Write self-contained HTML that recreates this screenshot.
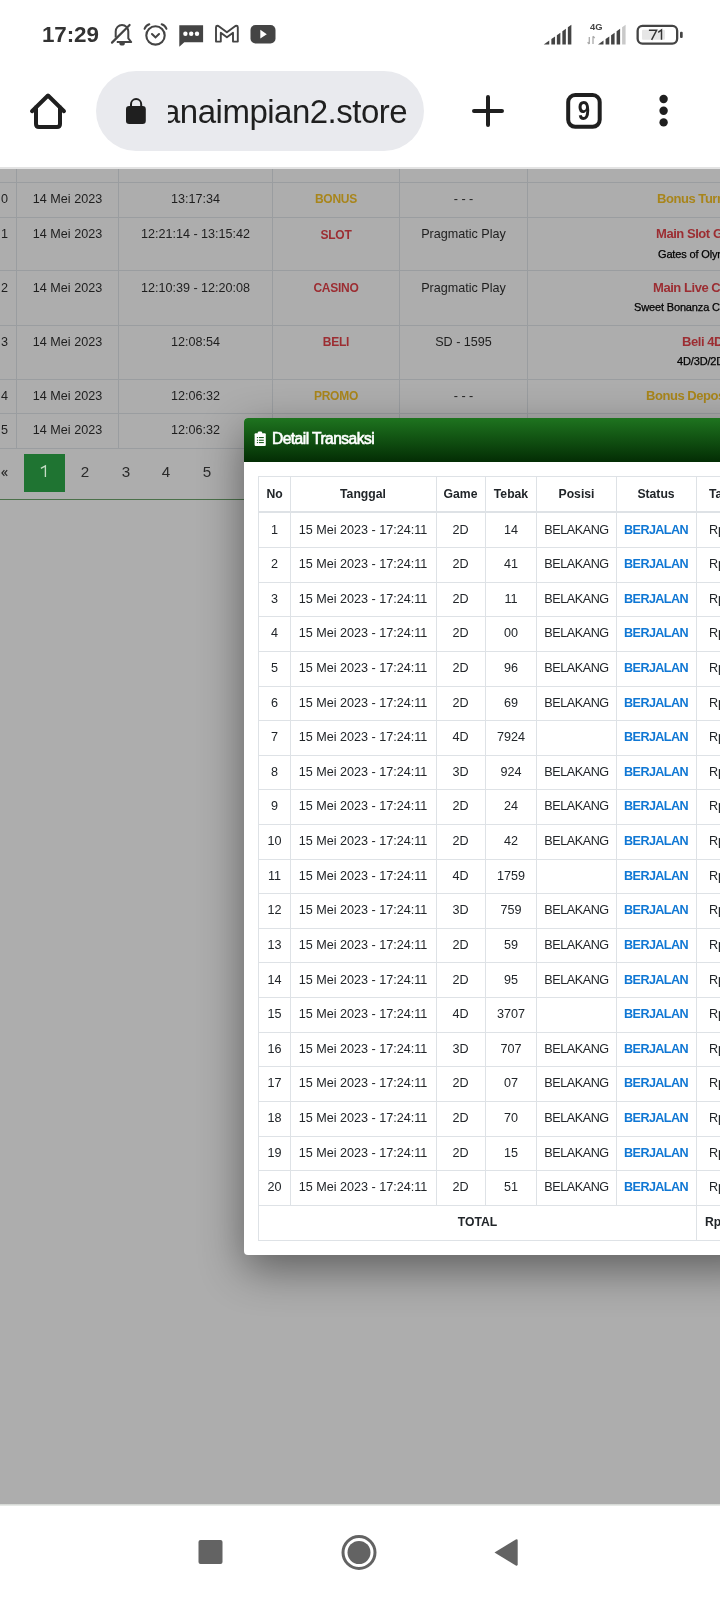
<!DOCTYPE html>
<html><head><meta charset="utf-8"><style>
html,body{margin:0;padding:0}
body{width:720px;height:1600px;position:relative;overflow:hidden;background:#fff;font-family:"Liberation Sans",sans-serif}
.t{position:absolute;white-space:nowrap;will-change:transform}
.r{position:absolute}
svg text{will-change:transform}
</style></head><body>
<div class="t" style="left:41.60px;top:24.33px;font-size:22.4px;line-height:22.4px;color:#333;font-weight:700;letter-spacing:-0.1px;">17:29</div>
<svg class="r" style="left:0;top:0" width="720" height="70" viewBox="0 0 720 70">
<!-- bell muted -->
<g fill="none" stroke="#444" stroke-width="2" stroke-linejoin="round">
<path d="M116.8 42 H131.2 L128.3 38.3 V31.6 A6.3 6.6 0 0 0 115.7 31.6 V37.5"/>
</g>
<path d="M112 42.6 L129.6 25" stroke="#444" stroke-width="2.2" stroke-linecap="round"/>
<path d="M119.3 43 h5.6 a2.8 2.6 0 0 1 -5.6 0z" fill="#444"/>
<!-- alarm -->
<g fill="none" stroke="#444" stroke-width="2.1" stroke-linecap="round">
<circle cx="155.5" cy="35.4" r="9.2"/>
<path d="M152 34 L155.5 37.4 L159 34"/>
<path d="M144.6 28.8 A7 7 0 0 1 149.3 24.2"/>
<path d="M166.4 28.8 A7 7 0 0 0 161.7 24.2"/>
</g>
<!-- message -->
<path d="M179.3 25.2 h23.8 v17 h-18.8 l-5 4.6 z" fill="#444"/>
<circle cx="185.4" cy="33.8" r="2.2" fill="#fff"/><circle cx="191.2" cy="33.8" r="2.2" fill="#fff"/><circle cx="197" cy="33.8" r="2.2" fill="#fff"/>
<!-- gmail -->
<path d="M216 41.6 V27.3 Q216 25.8 217.5 25.8 Q218.3 25.8 219.1 26.4 L226.9 32.3 L234.7 26.4 Q235.5 25.8 236.3 25.8 Q237.8 25.8 237.8 27.3 V41.6 H233 V32.8 L226.9 37.3 L220.8 32.8 V41.6 Z" fill="#fff" stroke="#444" stroke-width="1.9" stroke-linejoin="round"/>
<!-- youtube -->
<rect x="250.5" y="25" width="25" height="18.4" rx="5" fill="#444"/>
<path d="M260.3 29.8 L266.8 34.2 L260.3 38.6 Z" fill="#fff"/>
<!-- signal 1 -->
<path d="M543.75 44.5 L549.25 40.58 V44.5 Z" fill="#444"/>
<path d="M551.35 44.5 V39.08 L555.05 36.45 V44.5 Z" fill="#444"/>
<path d="M556.85 44.5 V35.16 L560.35 32.67 V44.5 Z" fill="#444"/>
<path d="M562.35 44.5 V31.24 L565.85 28.75 V44.5 Z" fill="#444"/>
<path d="M567.85 44.5 V27.32 L571.35 24.83 V44.5 Z" fill="#444"/>
<!-- 4G -->
<text x="590" y="29.8" font-family="Liberation Sans" font-weight="700" font-size="9.4" fill="#444">4G</text>
<g stroke="#aaa" stroke-width="1.3" fill="none"><path d="M589.3 44 V37 M587.6 42.2 L589.3 44"/><path d="M593 36.3 V44 M594.7 38 L593 36.3"/></g>
<path d="M598.00 44.5 L603.50 40.58 V44.5 Z" fill="#444"/>
<path d="M605.60 44.5 V39.08 L609.30 36.45 V44.5 Z" fill="#444"/>
<path d="M611.10 44.5 V35.16 L614.60 32.67 V44.5 Z" fill="#444"/>
<path d="M616.60 44.5 V31.24 L620.10 28.75 V44.5 Z" fill="#444"/>
<path d="M622.10 44.5 V27.32 L625.60 24.83 V44.5 Z" fill="#c9c9c9"/>
<!-- battery -->
<rect x="637.65" y="25.85" width="39.5" height="17.8" rx="4.8" fill="none" stroke="#444" stroke-width="2.3"/>
<rect x="642" y="29.7" width="23" height="10" rx="1" fill="#e6e6e6"/>
<rect x="680" y="31.7" width="2.7" height="6.4" rx="1" fill="#444"/>
<path d="M648.9 30.3 H656.6 L651.6 39.8 M658.2 32.3 L661.5 30 V39.8" fill="none" stroke="#333" stroke-width="1.45" stroke-linejoin="miter"/>
</svg>
<div class="r" style="left:96px;top:71px;width:328px;height:80px;background:#e9eaee;border-radius:40px;"></div>
<svg class="r" style="left:0;top:70px" width="720" height="100" viewBox="0 70 720 100">
<!-- home -->
<path d="M32 111.2 L48 95.5 L64 111.2 M36 107 V124 Q36 127 39 127 H57 Q60 127 60 124 V107" fill="none" stroke="#1f1f1f" stroke-width="4" stroke-linecap="round" stroke-linejoin="round"/>
<!-- lock -->
<rect x="126" y="106" width="19.8" height="18" rx="3.2" fill="#1f1f1f"/>
<path d="M131 107 V104.2 A5.1 5.1 0 0 1 141.2 104.2 V107" fill="none" stroke="#1f1f1f" stroke-width="2"/>
<!-- plus -->
<path d="M474 111 H502 M488 97 V125" stroke="#1f1f1f" stroke-width="4" stroke-linecap="round"/>
<!-- tabs -->
<rect x="568.2" y="95" width="31.5" height="31.8" rx="7" fill="none" stroke="#1f1f1f" stroke-width="4"/>
<text x="0" y="0" transform="translate(584 119.8) scale(0.82 1)" text-anchor="middle" font-family="Liberation Sans" font-weight="700" font-size="27" fill="#1f1f1f">9</text>
<!-- menu -->
<circle cx="663.6" cy="99" r="4.2" fill="#1f1f1f"/><circle cx="663.6" cy="110.7" r="4.2" fill="#1f1f1f"/><circle cx="663.6" cy="122.4" r="4.2" fill="#1f1f1f"/>
</svg>
<div class="r" style="left:168px;top:85px;width:256px;height:50px;overflow:hidden"><div class="t" style="right:17px;top:9.86px;font-size:33px;line-height:33px;letter-spacing:-0.5px;color:#1f1f1f;white-space:nowrap">sanaimpian2.store</div></div>
<div class="r" style="left:0px;top:167px;width:720px;height:2px;background:#e3e3e3;"></div>
<div class="r" style="left:0px;top:169px;width:720px;height:1335px;background:#adadad;"></div>
<div class="r" style="left:16px;top:169px;width:1px;height:279px;background:#9a9da0;"></div>
<div class="r" style="left:118px;top:169px;width:1px;height:279px;background:#9a9da0;"></div>
<div class="r" style="left:272px;top:169px;width:1px;height:279px;background:#9a9da0;"></div>
<div class="r" style="left:399px;top:169px;width:1px;height:279px;background:#9a9da0;"></div>
<div class="r" style="left:527px;top:169px;width:1px;height:279px;background:#9a9da0;"></div>
<div class="r" style="left:0px;top:182px;width:720px;height:1px;background:#9a9da0;"></div>
<div class="r" style="left:0px;top:217px;width:720px;height:1px;background:#9a9da0;"></div>
<div class="r" style="left:0px;top:270px;width:720px;height:1px;background:#9a9da0;"></div>
<div class="r" style="left:0px;top:325px;width:720px;height:1px;background:#9a9da0;"></div>
<div class="r" style="left:0px;top:379px;width:720px;height:1px;background:#9a9da0;"></div>
<div class="r" style="left:0px;top:413px;width:720px;height:1px;background:#9a9da0;"></div>
<div class="r" style="left:0px;top:448px;width:720px;height:1px;background:#9a9da0;"></div>
<div class="t" style="left:-40.00px;top:192.63px;font-size:12.6px;line-height:12.6px;color:#1e1e1e;width:48.00px;text-align:right;">0</div>
<div class="t" style="left:16.00px;top:192.63px;font-size:12.6px;line-height:12.6px;color:#1e1e1e;width:103.00px;text-align:center;">14 Mei 2023</div>
<div class="t" style="left:119.00px;top:192.63px;font-size:12.6px;line-height:12.6px;color:#1e1e1e;width:153.00px;text-align:center;">13:17:34</div>
<div class="t" style="left:272.00px;top:193.14px;font-size:12px;line-height:12px;color:#a8851b;font-weight:700;letter-spacing:-0.25px;width:128.00px;text-align:center;">BONUS</div>
<div class="t" style="left:400.00px;top:192.63px;font-size:12.6px;line-height:12.6px;color:#1e1e1e;width:127.00px;text-align:center;">- - -</div>
<div class="t" style="left:-40.00px;top:228.03px;font-size:12.6px;line-height:12.6px;color:#1e1e1e;width:48.00px;text-align:right;">1</div>
<div class="t" style="left:16.00px;top:228.03px;font-size:12.6px;line-height:12.6px;color:#1e1e1e;width:103.00px;text-align:center;">14 Mei 2023</div>
<div class="t" style="left:119.00px;top:228.03px;font-size:12.6px;line-height:12.6px;color:#1e1e1e;width:153.00px;text-align:center;">12:21:14 - 13:15:42</div>
<div class="t" style="left:272.00px;top:228.54px;font-size:12px;line-height:12px;color:#9c2d32;font-weight:700;letter-spacing:-0.25px;width:128.00px;text-align:center;">SLOT</div>
<div class="t" style="left:400.00px;top:228.03px;font-size:12.6px;line-height:12.6px;color:#1e1e1e;width:127.00px;text-align:center;">Pragmatic Play</div>
<div class="t" style="left:-40.00px;top:281.73px;font-size:12.6px;line-height:12.6px;color:#1e1e1e;width:48.00px;text-align:right;">2</div>
<div class="t" style="left:16.00px;top:281.73px;font-size:12.6px;line-height:12.6px;color:#1e1e1e;width:103.00px;text-align:center;">14 Mei 2023</div>
<div class="t" style="left:119.00px;top:281.73px;font-size:12.6px;line-height:12.6px;color:#1e1e1e;width:153.00px;text-align:center;">12:10:39 - 12:20:08</div>
<div class="t" style="left:272.00px;top:282.24px;font-size:12px;line-height:12px;color:#9c2d32;font-weight:700;letter-spacing:-0.25px;width:128.00px;text-align:center;">CASINO</div>
<div class="t" style="left:400.00px;top:281.73px;font-size:12.6px;line-height:12.6px;color:#1e1e1e;width:127.00px;text-align:center;">Pragmatic Play</div>
<div class="t" style="left:-40.00px;top:335.53px;font-size:12.6px;line-height:12.6px;color:#1e1e1e;width:48.00px;text-align:right;">3</div>
<div class="t" style="left:16.00px;top:335.53px;font-size:12.6px;line-height:12.6px;color:#1e1e1e;width:103.00px;text-align:center;">14 Mei 2023</div>
<div class="t" style="left:119.00px;top:335.53px;font-size:12.6px;line-height:12.6px;color:#1e1e1e;width:153.00px;text-align:center;">12:08:54</div>
<div class="t" style="left:272.00px;top:336.04px;font-size:12px;line-height:12px;color:#9c2d32;font-weight:700;letter-spacing:-0.25px;width:128.00px;text-align:center;">BELI</div>
<div class="t" style="left:400.00px;top:335.53px;font-size:12.6px;line-height:12.6px;color:#1e1e1e;width:127.00px;text-align:center;">SD - 1595</div>
<div class="t" style="left:-40.00px;top:389.73px;font-size:12.6px;line-height:12.6px;color:#1e1e1e;width:48.00px;text-align:right;">4</div>
<div class="t" style="left:16.00px;top:389.73px;font-size:12.6px;line-height:12.6px;color:#1e1e1e;width:103.00px;text-align:center;">14 Mei 2023</div>
<div class="t" style="left:119.00px;top:389.73px;font-size:12.6px;line-height:12.6px;color:#1e1e1e;width:153.00px;text-align:center;">12:06:32</div>
<div class="t" style="left:272.00px;top:390.24px;font-size:12px;line-height:12px;color:#a8851b;font-weight:700;letter-spacing:-0.25px;width:128.00px;text-align:center;">PROMO</div>
<div class="t" style="left:400.00px;top:389.73px;font-size:12.6px;line-height:12.6px;color:#1e1e1e;width:127.00px;text-align:center;">- - -</div>
<div class="t" style="left:-40.00px;top:423.83px;font-size:12.6px;line-height:12.6px;color:#1e1e1e;width:48.00px;text-align:right;">5</div>
<div class="t" style="left:16.00px;top:423.83px;font-size:12.6px;line-height:12.6px;color:#1e1e1e;width:103.00px;text-align:center;">14 Mei 2023</div>
<div class="t" style="left:119.00px;top:423.83px;font-size:12.6px;line-height:12.6px;color:#1e1e1e;width:153.00px;text-align:center;">12:06:32</div>
<div class="t" style="left:656.70px;top:191.99px;font-size:13px;line-height:13px;color:#a8851b;font-weight:700;letter-spacing:-0.45px;white-space:nowrap;">Bonus Turnover</div>
<div class="t" style="left:656.20px;top:226.99px;font-size:13px;line-height:13px;color:#9c2d32;font-weight:700;letter-spacing:-0.45px;white-space:nowrap;">Main Slot Game</div>
<div class="t" style="left:657.50px;top:248.59px;font-size:11px;line-height:11px;color:#000;letter-spacing:-0.15px;-webkit-text-stroke:0.25px #000;">Gates of Olympus</div>
<div class="t" style="left:653.00px;top:280.99px;font-size:13px;line-height:13px;color:#9c2d32;font-weight:700;letter-spacing:-0.45px;white-space:nowrap;">Main Live Casino</div>
<div class="t" style="left:633.60px;top:301.69px;font-size:11px;line-height:11px;color:#000;letter-spacing:-0.15px;-webkit-text-stroke:0.25px #000;">Sweet Bonanza Candyland</div>
<div class="t" style="left:682.00px;top:334.99px;font-size:13px;line-height:13px;color:#9c2d32;font-weight:700;letter-spacing:-0.45px;white-space:nowrap;">Beli 4D</div>
<div class="t" style="left:677.00px;top:355.99px;font-size:11px;line-height:11px;color:#000;letter-spacing:-0.15px;-webkit-text-stroke:0.25px #000;">4D/3D/2D</div>
<div class="t" style="left:646.40px;top:389.29px;font-size:13px;line-height:13px;color:#a8851b;font-weight:700;letter-spacing:-0.45px;white-space:nowrap;">Bonus Deposit</div>
<div class="r" style="left:24px;top:454px;width:41px;height:37.5px;background:#1f7432;"></div>
<svg class="r" style="left:0;top:460px" width="60" height="25" viewBox="0 460 60 25">
<path d="M4.4 470.2 L1.9 473 L4.4 475.8 M7.2 470.2 L4.7 473 L7.2 475.8" fill="none" stroke="#2a2a2a" stroke-width="1.15"/>
<path d="M40.9 468.3 L45.4 465.9 V477" fill="none" stroke="#c6dcc6" stroke-width="1.35"/>
</svg>
<div class="t" style="left:70.10px;top:464.23px;font-size:15.2px;line-height:15.2px;color:#2a2a2a;width:30.00px;text-align:center;">2</div>
<div class="t" style="left:110.60px;top:464.23px;font-size:15.2px;line-height:15.2px;color:#2a2a2a;width:30.00px;text-align:center;">3</div>
<div class="t" style="left:151.30px;top:464.23px;font-size:15.2px;line-height:15.2px;color:#2a2a2a;width:30.00px;text-align:center;">4</div>
<div class="t" style="left:192.30px;top:464.23px;font-size:15.2px;line-height:15.2px;color:#2a2a2a;width:30.00px;text-align:center;">5</div>
<div class="r" style="left:0px;top:499px;width:250px;height:1px;background:#4b704a;"></div>
<div class="r" style="left:244px;top:418px;width:520px;height:837px;background:#fff;border-radius:4px;box-shadow:0 14px 44px rgba(0,0,0,.46)"></div>
<div class="r" style="left:244px;top:418px;width:520px;height:44px;background:linear-gradient(#1e741f,#032d04);border-radius:4px 4px 0 0"></div>
<svg class="r" style="left:250px;top:428px" width="20" height="22" viewBox="250 428 20 22">
<path d="M255.6 433.2 H264.8 Q265.8 433.2 265.8 434.2 V444.9 Q265.8 445.9 264.8 445.9 H255.6 Q254.6 445.9 254.6 444.9 V434.2 Q254.6 433.2 255.6 433.2 Z" fill="#fff"/>
<path d="M257.8 434 V432.6 Q257.8 431.4 259 431.4 H260.9 Q262.1 431.4 262.1 432.6 V434 Z" fill="#fff"/>
<g fill="#1f5d20"><rect x="256.9" y="437" width="1.2" height="1.1"/><rect x="259" y="437" width="4.8" height="1.1"/>
<rect x="256.9" y="439.7" width="1.2" height="1.1"/><rect x="259" y="439.7" width="4.8" height="1.1"/>
<rect x="256.9" y="442" width="1.2" height="1.1"/><rect x="259" y="442" width="4.8" height="1.1"/></g>
</svg>
<div class="t" style="left:272.20px;top:430.79px;font-size:15.6px;line-height:15.6px;color:#fff;letter-spacing:-0.55px;-webkit-text-stroke:0.65px #fff;">Detail Transaksi</div>
<div class="r" style="left:258px;top:476px;width:520px;height:1px;background:#dee2e6;"></div>
<div class="r" style="left:258px;top:511px;width:520px;height:2px;background:#dee2e6;"></div>
<div class="r" style="left:258px;top:547px;width:520px;height:1px;background:#dee2e6;"></div>
<div class="r" style="left:258px;top:582px;width:520px;height:1px;background:#dee2e6;"></div>
<div class="r" style="left:258px;top:616px;width:520px;height:1px;background:#dee2e6;"></div>
<div class="r" style="left:258px;top:651px;width:520px;height:1px;background:#dee2e6;"></div>
<div class="r" style="left:258px;top:686px;width:520px;height:1px;background:#dee2e6;"></div>
<div class="r" style="left:258px;top:720px;width:520px;height:1px;background:#dee2e6;"></div>
<div class="r" style="left:258px;top:755px;width:520px;height:1px;background:#dee2e6;"></div>
<div class="r" style="left:258px;top:789px;width:520px;height:1px;background:#dee2e6;"></div>
<div class="r" style="left:258px;top:824px;width:520px;height:1px;background:#dee2e6;"></div>
<div class="r" style="left:258px;top:859px;width:520px;height:1px;background:#dee2e6;"></div>
<div class="r" style="left:258px;top:893px;width:520px;height:1px;background:#dee2e6;"></div>
<div class="r" style="left:258px;top:928px;width:520px;height:1px;background:#dee2e6;"></div>
<div class="r" style="left:258px;top:962px;width:520px;height:1px;background:#dee2e6;"></div>
<div class="r" style="left:258px;top:997px;width:520px;height:1px;background:#dee2e6;"></div>
<div class="r" style="left:258px;top:1032px;width:520px;height:1px;background:#dee2e6;"></div>
<div class="r" style="left:258px;top:1066px;width:520px;height:1px;background:#dee2e6;"></div>
<div class="r" style="left:258px;top:1101px;width:520px;height:1px;background:#dee2e6;"></div>
<div class="r" style="left:258px;top:1136px;width:520px;height:1px;background:#dee2e6;"></div>
<div class="r" style="left:258px;top:1170px;width:520px;height:1px;background:#dee2e6;"></div>
<div class="r" style="left:258px;top:1205px;width:520px;height:1px;background:#dee2e6;"></div>
<div class="r" style="left:258px;top:1240px;width:520px;height:1px;background:#dee2e6;"></div>
<div class="r" style="left:258px;top:476px;width:1px;height:765px;background:#dee2e6;"></div>
<div class="r" style="left:290px;top:476px;width:1px;height:729px;background:#dee2e6;"></div>
<div class="r" style="left:436px;top:476px;width:1px;height:729px;background:#dee2e6;"></div>
<div class="r" style="left:485px;top:476px;width:1px;height:729px;background:#dee2e6;"></div>
<div class="r" style="left:536px;top:476px;width:1px;height:729px;background:#dee2e6;"></div>
<div class="r" style="left:616px;top:476px;width:1px;height:729px;background:#dee2e6;"></div>
<div class="r" style="left:696px;top:476px;width:1px;height:765px;background:#dee2e6;"></div>
<div class="t" style="left:259.00px;top:487.67px;font-size:12.2px;line-height:12.2px;color:#212529;font-weight:700;width:31.00px;text-align:center;">No</div>
<div class="t" style="left:290.00px;top:487.67px;font-size:12.2px;line-height:12.2px;color:#212529;font-weight:700;width:146.00px;text-align:center;">Tanggal</div>
<div class="t" style="left:436.00px;top:487.67px;font-size:12.2px;line-height:12.2px;color:#212529;font-weight:700;width:49.00px;text-align:center;">Game</div>
<div class="t" style="left:485.00px;top:487.67px;font-size:12.2px;line-height:12.2px;color:#212529;font-weight:700;width:52.00px;text-align:center;">Tebak</div>
<div class="t" style="left:537.00px;top:487.67px;font-size:12.2px;line-height:12.2px;color:#212529;font-weight:700;width:79.00px;text-align:center;">Posisi</div>
<div class="t" style="left:616.00px;top:487.67px;font-size:12.2px;line-height:12.2px;color:#212529;font-weight:700;width:80.00px;text-align:center;">Status</div>
<div class="t" style="left:709.30px;top:487.67px;font-size:12.2px;line-height:12.2px;color:#212529;font-weight:700;white-space:nowrap;">Taruhan</div>
<div class="t" style="left:259.00px;top:523.53px;font-size:12.6px;line-height:12.6px;color:#212529;width:31.00px;text-align:center;">1</div>
<div class="t" style="left:290.00px;top:523.53px;font-size:12.6px;line-height:12.6px;color:#212529;width:146.00px;text-align:center;">15 Mei 2023 - 17:24:11</div>
<div class="t" style="left:436.00px;top:523.53px;font-size:12.6px;line-height:12.6px;color:#212529;width:49.00px;text-align:center;">2D</div>
<div class="t" style="left:485.00px;top:523.53px;font-size:12.6px;line-height:12.6px;color:#212529;width:52.00px;text-align:center;">14</div>
<div class="t" style="left:537.00px;top:523.53px;font-size:12.6px;line-height:12.6px;color:#212529;letter-spacing:-0.45px;width:79.00px;text-align:center;">BELAKANG</div>
<div class="t" style="left:616.00px;top:523.53px;font-size:12.6px;line-height:12.6px;color:#0f77d4;font-weight:700;letter-spacing:-0.6px;width:80.00px;text-align:center;">BERJALAN</div>
<div class="t" style="left:709.30px;top:523.53px;font-size:12.6px;line-height:12.6px;color:#212529;white-space:nowrap;">Rp 1.000</div>
<div class="t" style="left:259.00px;top:558.15px;font-size:12.6px;line-height:12.6px;color:#212529;width:31.00px;text-align:center;">2</div>
<div class="t" style="left:290.00px;top:558.15px;font-size:12.6px;line-height:12.6px;color:#212529;width:146.00px;text-align:center;">15 Mei 2023 - 17:24:11</div>
<div class="t" style="left:436.00px;top:558.15px;font-size:12.6px;line-height:12.6px;color:#212529;width:49.00px;text-align:center;">2D</div>
<div class="t" style="left:485.00px;top:558.15px;font-size:12.6px;line-height:12.6px;color:#212529;width:52.00px;text-align:center;">41</div>
<div class="t" style="left:537.00px;top:558.15px;font-size:12.6px;line-height:12.6px;color:#212529;letter-spacing:-0.45px;width:79.00px;text-align:center;">BELAKANG</div>
<div class="t" style="left:616.00px;top:558.15px;font-size:12.6px;line-height:12.6px;color:#0f77d4;font-weight:700;letter-spacing:-0.6px;width:80.00px;text-align:center;">BERJALAN</div>
<div class="t" style="left:709.30px;top:558.15px;font-size:12.6px;line-height:12.6px;color:#212529;white-space:nowrap;">Rp 1.000</div>
<div class="t" style="left:259.00px;top:592.77px;font-size:12.6px;line-height:12.6px;color:#212529;width:31.00px;text-align:center;">3</div>
<div class="t" style="left:290.00px;top:592.77px;font-size:12.6px;line-height:12.6px;color:#212529;width:146.00px;text-align:center;">15 Mei 2023 - 17:24:11</div>
<div class="t" style="left:436.00px;top:592.77px;font-size:12.6px;line-height:12.6px;color:#212529;width:49.00px;text-align:center;">2D</div>
<div class="t" style="left:485.00px;top:592.77px;font-size:12.6px;line-height:12.6px;color:#212529;width:52.00px;text-align:center;">11</div>
<div class="t" style="left:537.00px;top:592.77px;font-size:12.6px;line-height:12.6px;color:#212529;letter-spacing:-0.45px;width:79.00px;text-align:center;">BELAKANG</div>
<div class="t" style="left:616.00px;top:592.77px;font-size:12.6px;line-height:12.6px;color:#0f77d4;font-weight:700;letter-spacing:-0.6px;width:80.00px;text-align:center;">BERJALAN</div>
<div class="t" style="left:709.30px;top:592.77px;font-size:12.6px;line-height:12.6px;color:#212529;white-space:nowrap;">Rp 1.000</div>
<div class="t" style="left:259.00px;top:627.39px;font-size:12.6px;line-height:12.6px;color:#212529;width:31.00px;text-align:center;">4</div>
<div class="t" style="left:290.00px;top:627.39px;font-size:12.6px;line-height:12.6px;color:#212529;width:146.00px;text-align:center;">15 Mei 2023 - 17:24:11</div>
<div class="t" style="left:436.00px;top:627.39px;font-size:12.6px;line-height:12.6px;color:#212529;width:49.00px;text-align:center;">2D</div>
<div class="t" style="left:485.00px;top:627.39px;font-size:12.6px;line-height:12.6px;color:#212529;width:52.00px;text-align:center;">00</div>
<div class="t" style="left:537.00px;top:627.39px;font-size:12.6px;line-height:12.6px;color:#212529;letter-spacing:-0.45px;width:79.00px;text-align:center;">BELAKANG</div>
<div class="t" style="left:616.00px;top:627.39px;font-size:12.6px;line-height:12.6px;color:#0f77d4;font-weight:700;letter-spacing:-0.6px;width:80.00px;text-align:center;">BERJALAN</div>
<div class="t" style="left:709.30px;top:627.39px;font-size:12.6px;line-height:12.6px;color:#212529;white-space:nowrap;">Rp 1.000</div>
<div class="t" style="left:259.00px;top:662.01px;font-size:12.6px;line-height:12.6px;color:#212529;width:31.00px;text-align:center;">5</div>
<div class="t" style="left:290.00px;top:662.01px;font-size:12.6px;line-height:12.6px;color:#212529;width:146.00px;text-align:center;">15 Mei 2023 - 17:24:11</div>
<div class="t" style="left:436.00px;top:662.01px;font-size:12.6px;line-height:12.6px;color:#212529;width:49.00px;text-align:center;">2D</div>
<div class="t" style="left:485.00px;top:662.01px;font-size:12.6px;line-height:12.6px;color:#212529;width:52.00px;text-align:center;">96</div>
<div class="t" style="left:537.00px;top:662.01px;font-size:12.6px;line-height:12.6px;color:#212529;letter-spacing:-0.45px;width:79.00px;text-align:center;">BELAKANG</div>
<div class="t" style="left:616.00px;top:662.01px;font-size:12.6px;line-height:12.6px;color:#0f77d4;font-weight:700;letter-spacing:-0.6px;width:80.00px;text-align:center;">BERJALAN</div>
<div class="t" style="left:709.30px;top:662.01px;font-size:12.6px;line-height:12.6px;color:#212529;white-space:nowrap;">Rp 1.000</div>
<div class="t" style="left:259.00px;top:696.63px;font-size:12.6px;line-height:12.6px;color:#212529;width:31.00px;text-align:center;">6</div>
<div class="t" style="left:290.00px;top:696.63px;font-size:12.6px;line-height:12.6px;color:#212529;width:146.00px;text-align:center;">15 Mei 2023 - 17:24:11</div>
<div class="t" style="left:436.00px;top:696.63px;font-size:12.6px;line-height:12.6px;color:#212529;width:49.00px;text-align:center;">2D</div>
<div class="t" style="left:485.00px;top:696.63px;font-size:12.6px;line-height:12.6px;color:#212529;width:52.00px;text-align:center;">69</div>
<div class="t" style="left:537.00px;top:696.63px;font-size:12.6px;line-height:12.6px;color:#212529;letter-spacing:-0.45px;width:79.00px;text-align:center;">BELAKANG</div>
<div class="t" style="left:616.00px;top:696.63px;font-size:12.6px;line-height:12.6px;color:#0f77d4;font-weight:700;letter-spacing:-0.6px;width:80.00px;text-align:center;">BERJALAN</div>
<div class="t" style="left:709.30px;top:696.63px;font-size:12.6px;line-height:12.6px;color:#212529;white-space:nowrap;">Rp 1.000</div>
<div class="t" style="left:259.00px;top:731.25px;font-size:12.6px;line-height:12.6px;color:#212529;width:31.00px;text-align:center;">7</div>
<div class="t" style="left:290.00px;top:731.25px;font-size:12.6px;line-height:12.6px;color:#212529;width:146.00px;text-align:center;">15 Mei 2023 - 17:24:11</div>
<div class="t" style="left:436.00px;top:731.25px;font-size:12.6px;line-height:12.6px;color:#212529;width:49.00px;text-align:center;">4D</div>
<div class="t" style="left:485.00px;top:731.25px;font-size:12.6px;line-height:12.6px;color:#212529;width:52.00px;text-align:center;">7924</div>
<div class="t" style="left:616.00px;top:731.25px;font-size:12.6px;line-height:12.6px;color:#0f77d4;font-weight:700;letter-spacing:-0.6px;width:80.00px;text-align:center;">BERJALAN</div>
<div class="t" style="left:709.30px;top:731.25px;font-size:12.6px;line-height:12.6px;color:#212529;white-space:nowrap;">Rp 1.000</div>
<div class="t" style="left:259.00px;top:765.87px;font-size:12.6px;line-height:12.6px;color:#212529;width:31.00px;text-align:center;">8</div>
<div class="t" style="left:290.00px;top:765.87px;font-size:12.6px;line-height:12.6px;color:#212529;width:146.00px;text-align:center;">15 Mei 2023 - 17:24:11</div>
<div class="t" style="left:436.00px;top:765.87px;font-size:12.6px;line-height:12.6px;color:#212529;width:49.00px;text-align:center;">3D</div>
<div class="t" style="left:485.00px;top:765.87px;font-size:12.6px;line-height:12.6px;color:#212529;width:52.00px;text-align:center;">924</div>
<div class="t" style="left:537.00px;top:765.87px;font-size:12.6px;line-height:12.6px;color:#212529;letter-spacing:-0.45px;width:79.00px;text-align:center;">BELAKANG</div>
<div class="t" style="left:616.00px;top:765.87px;font-size:12.6px;line-height:12.6px;color:#0f77d4;font-weight:700;letter-spacing:-0.6px;width:80.00px;text-align:center;">BERJALAN</div>
<div class="t" style="left:709.30px;top:765.87px;font-size:12.6px;line-height:12.6px;color:#212529;white-space:nowrap;">Rp 1.000</div>
<div class="t" style="left:259.00px;top:800.49px;font-size:12.6px;line-height:12.6px;color:#212529;width:31.00px;text-align:center;">9</div>
<div class="t" style="left:290.00px;top:800.49px;font-size:12.6px;line-height:12.6px;color:#212529;width:146.00px;text-align:center;">15 Mei 2023 - 17:24:11</div>
<div class="t" style="left:436.00px;top:800.49px;font-size:12.6px;line-height:12.6px;color:#212529;width:49.00px;text-align:center;">2D</div>
<div class="t" style="left:485.00px;top:800.49px;font-size:12.6px;line-height:12.6px;color:#212529;width:52.00px;text-align:center;">24</div>
<div class="t" style="left:537.00px;top:800.49px;font-size:12.6px;line-height:12.6px;color:#212529;letter-spacing:-0.45px;width:79.00px;text-align:center;">BELAKANG</div>
<div class="t" style="left:616.00px;top:800.49px;font-size:12.6px;line-height:12.6px;color:#0f77d4;font-weight:700;letter-spacing:-0.6px;width:80.00px;text-align:center;">BERJALAN</div>
<div class="t" style="left:709.30px;top:800.49px;font-size:12.6px;line-height:12.6px;color:#212529;white-space:nowrap;">Rp 1.000</div>
<div class="t" style="left:259.00px;top:835.11px;font-size:12.6px;line-height:12.6px;color:#212529;width:31.00px;text-align:center;">10</div>
<div class="t" style="left:290.00px;top:835.11px;font-size:12.6px;line-height:12.6px;color:#212529;width:146.00px;text-align:center;">15 Mei 2023 - 17:24:11</div>
<div class="t" style="left:436.00px;top:835.11px;font-size:12.6px;line-height:12.6px;color:#212529;width:49.00px;text-align:center;">2D</div>
<div class="t" style="left:485.00px;top:835.11px;font-size:12.6px;line-height:12.6px;color:#212529;width:52.00px;text-align:center;">42</div>
<div class="t" style="left:537.00px;top:835.11px;font-size:12.6px;line-height:12.6px;color:#212529;letter-spacing:-0.45px;width:79.00px;text-align:center;">BELAKANG</div>
<div class="t" style="left:616.00px;top:835.11px;font-size:12.6px;line-height:12.6px;color:#0f77d4;font-weight:700;letter-spacing:-0.6px;width:80.00px;text-align:center;">BERJALAN</div>
<div class="t" style="left:709.30px;top:835.11px;font-size:12.6px;line-height:12.6px;color:#212529;white-space:nowrap;">Rp 1.000</div>
<div class="t" style="left:259.00px;top:869.73px;font-size:12.6px;line-height:12.6px;color:#212529;width:31.00px;text-align:center;">11</div>
<div class="t" style="left:290.00px;top:869.73px;font-size:12.6px;line-height:12.6px;color:#212529;width:146.00px;text-align:center;">15 Mei 2023 - 17:24:11</div>
<div class="t" style="left:436.00px;top:869.73px;font-size:12.6px;line-height:12.6px;color:#212529;width:49.00px;text-align:center;">4D</div>
<div class="t" style="left:485.00px;top:869.73px;font-size:12.6px;line-height:12.6px;color:#212529;width:52.00px;text-align:center;">1759</div>
<div class="t" style="left:616.00px;top:869.73px;font-size:12.6px;line-height:12.6px;color:#0f77d4;font-weight:700;letter-spacing:-0.6px;width:80.00px;text-align:center;">BERJALAN</div>
<div class="t" style="left:709.30px;top:869.73px;font-size:12.6px;line-height:12.6px;color:#212529;white-space:nowrap;">Rp 1.000</div>
<div class="t" style="left:259.00px;top:904.35px;font-size:12.6px;line-height:12.6px;color:#212529;width:31.00px;text-align:center;">12</div>
<div class="t" style="left:290.00px;top:904.35px;font-size:12.6px;line-height:12.6px;color:#212529;width:146.00px;text-align:center;">15 Mei 2023 - 17:24:11</div>
<div class="t" style="left:436.00px;top:904.35px;font-size:12.6px;line-height:12.6px;color:#212529;width:49.00px;text-align:center;">3D</div>
<div class="t" style="left:485.00px;top:904.35px;font-size:12.6px;line-height:12.6px;color:#212529;width:52.00px;text-align:center;">759</div>
<div class="t" style="left:537.00px;top:904.35px;font-size:12.6px;line-height:12.6px;color:#212529;letter-spacing:-0.45px;width:79.00px;text-align:center;">BELAKANG</div>
<div class="t" style="left:616.00px;top:904.35px;font-size:12.6px;line-height:12.6px;color:#0f77d4;font-weight:700;letter-spacing:-0.6px;width:80.00px;text-align:center;">BERJALAN</div>
<div class="t" style="left:709.30px;top:904.35px;font-size:12.6px;line-height:12.6px;color:#212529;white-space:nowrap;">Rp 1.000</div>
<div class="t" style="left:259.00px;top:938.97px;font-size:12.6px;line-height:12.6px;color:#212529;width:31.00px;text-align:center;">13</div>
<div class="t" style="left:290.00px;top:938.97px;font-size:12.6px;line-height:12.6px;color:#212529;width:146.00px;text-align:center;">15 Mei 2023 - 17:24:11</div>
<div class="t" style="left:436.00px;top:938.97px;font-size:12.6px;line-height:12.6px;color:#212529;width:49.00px;text-align:center;">2D</div>
<div class="t" style="left:485.00px;top:938.97px;font-size:12.6px;line-height:12.6px;color:#212529;width:52.00px;text-align:center;">59</div>
<div class="t" style="left:537.00px;top:938.97px;font-size:12.6px;line-height:12.6px;color:#212529;letter-spacing:-0.45px;width:79.00px;text-align:center;">BELAKANG</div>
<div class="t" style="left:616.00px;top:938.97px;font-size:12.6px;line-height:12.6px;color:#0f77d4;font-weight:700;letter-spacing:-0.6px;width:80.00px;text-align:center;">BERJALAN</div>
<div class="t" style="left:709.30px;top:938.97px;font-size:12.6px;line-height:12.6px;color:#212529;white-space:nowrap;">Rp 1.000</div>
<div class="t" style="left:259.00px;top:973.59px;font-size:12.6px;line-height:12.6px;color:#212529;width:31.00px;text-align:center;">14</div>
<div class="t" style="left:290.00px;top:973.59px;font-size:12.6px;line-height:12.6px;color:#212529;width:146.00px;text-align:center;">15 Mei 2023 - 17:24:11</div>
<div class="t" style="left:436.00px;top:973.59px;font-size:12.6px;line-height:12.6px;color:#212529;width:49.00px;text-align:center;">2D</div>
<div class="t" style="left:485.00px;top:973.59px;font-size:12.6px;line-height:12.6px;color:#212529;width:52.00px;text-align:center;">95</div>
<div class="t" style="left:537.00px;top:973.59px;font-size:12.6px;line-height:12.6px;color:#212529;letter-spacing:-0.45px;width:79.00px;text-align:center;">BELAKANG</div>
<div class="t" style="left:616.00px;top:973.59px;font-size:12.6px;line-height:12.6px;color:#0f77d4;font-weight:700;letter-spacing:-0.6px;width:80.00px;text-align:center;">BERJALAN</div>
<div class="t" style="left:709.30px;top:973.59px;font-size:12.6px;line-height:12.6px;color:#212529;white-space:nowrap;">Rp 1.000</div>
<div class="t" style="left:259.00px;top:1008.21px;font-size:12.6px;line-height:12.6px;color:#212529;width:31.00px;text-align:center;">15</div>
<div class="t" style="left:290.00px;top:1008.21px;font-size:12.6px;line-height:12.6px;color:#212529;width:146.00px;text-align:center;">15 Mei 2023 - 17:24:11</div>
<div class="t" style="left:436.00px;top:1008.21px;font-size:12.6px;line-height:12.6px;color:#212529;width:49.00px;text-align:center;">4D</div>
<div class="t" style="left:485.00px;top:1008.21px;font-size:12.6px;line-height:12.6px;color:#212529;width:52.00px;text-align:center;">3707</div>
<div class="t" style="left:616.00px;top:1008.21px;font-size:12.6px;line-height:12.6px;color:#0f77d4;font-weight:700;letter-spacing:-0.6px;width:80.00px;text-align:center;">BERJALAN</div>
<div class="t" style="left:709.30px;top:1008.21px;font-size:12.6px;line-height:12.6px;color:#212529;white-space:nowrap;">Rp 1.000</div>
<div class="t" style="left:259.00px;top:1042.83px;font-size:12.6px;line-height:12.6px;color:#212529;width:31.00px;text-align:center;">16</div>
<div class="t" style="left:290.00px;top:1042.83px;font-size:12.6px;line-height:12.6px;color:#212529;width:146.00px;text-align:center;">15 Mei 2023 - 17:24:11</div>
<div class="t" style="left:436.00px;top:1042.83px;font-size:12.6px;line-height:12.6px;color:#212529;width:49.00px;text-align:center;">3D</div>
<div class="t" style="left:485.00px;top:1042.83px;font-size:12.6px;line-height:12.6px;color:#212529;width:52.00px;text-align:center;">707</div>
<div class="t" style="left:537.00px;top:1042.83px;font-size:12.6px;line-height:12.6px;color:#212529;letter-spacing:-0.45px;width:79.00px;text-align:center;">BELAKANG</div>
<div class="t" style="left:616.00px;top:1042.83px;font-size:12.6px;line-height:12.6px;color:#0f77d4;font-weight:700;letter-spacing:-0.6px;width:80.00px;text-align:center;">BERJALAN</div>
<div class="t" style="left:709.30px;top:1042.83px;font-size:12.6px;line-height:12.6px;color:#212529;white-space:nowrap;">Rp 1.000</div>
<div class="t" style="left:259.00px;top:1077.45px;font-size:12.6px;line-height:12.6px;color:#212529;width:31.00px;text-align:center;">17</div>
<div class="t" style="left:290.00px;top:1077.45px;font-size:12.6px;line-height:12.6px;color:#212529;width:146.00px;text-align:center;">15 Mei 2023 - 17:24:11</div>
<div class="t" style="left:436.00px;top:1077.45px;font-size:12.6px;line-height:12.6px;color:#212529;width:49.00px;text-align:center;">2D</div>
<div class="t" style="left:485.00px;top:1077.45px;font-size:12.6px;line-height:12.6px;color:#212529;width:52.00px;text-align:center;">07</div>
<div class="t" style="left:537.00px;top:1077.45px;font-size:12.6px;line-height:12.6px;color:#212529;letter-spacing:-0.45px;width:79.00px;text-align:center;">BELAKANG</div>
<div class="t" style="left:616.00px;top:1077.45px;font-size:12.6px;line-height:12.6px;color:#0f77d4;font-weight:700;letter-spacing:-0.6px;width:80.00px;text-align:center;">BERJALAN</div>
<div class="t" style="left:709.30px;top:1077.45px;font-size:12.6px;line-height:12.6px;color:#212529;white-space:nowrap;">Rp 1.000</div>
<div class="t" style="left:259.00px;top:1112.07px;font-size:12.6px;line-height:12.6px;color:#212529;width:31.00px;text-align:center;">18</div>
<div class="t" style="left:290.00px;top:1112.07px;font-size:12.6px;line-height:12.6px;color:#212529;width:146.00px;text-align:center;">15 Mei 2023 - 17:24:11</div>
<div class="t" style="left:436.00px;top:1112.07px;font-size:12.6px;line-height:12.6px;color:#212529;width:49.00px;text-align:center;">2D</div>
<div class="t" style="left:485.00px;top:1112.07px;font-size:12.6px;line-height:12.6px;color:#212529;width:52.00px;text-align:center;">70</div>
<div class="t" style="left:537.00px;top:1112.07px;font-size:12.6px;line-height:12.6px;color:#212529;letter-spacing:-0.45px;width:79.00px;text-align:center;">BELAKANG</div>
<div class="t" style="left:616.00px;top:1112.07px;font-size:12.6px;line-height:12.6px;color:#0f77d4;font-weight:700;letter-spacing:-0.6px;width:80.00px;text-align:center;">BERJALAN</div>
<div class="t" style="left:709.30px;top:1112.07px;font-size:12.6px;line-height:12.6px;color:#212529;white-space:nowrap;">Rp 1.000</div>
<div class="t" style="left:259.00px;top:1146.69px;font-size:12.6px;line-height:12.6px;color:#212529;width:31.00px;text-align:center;">19</div>
<div class="t" style="left:290.00px;top:1146.69px;font-size:12.6px;line-height:12.6px;color:#212529;width:146.00px;text-align:center;">15 Mei 2023 - 17:24:11</div>
<div class="t" style="left:436.00px;top:1146.69px;font-size:12.6px;line-height:12.6px;color:#212529;width:49.00px;text-align:center;">2D</div>
<div class="t" style="left:485.00px;top:1146.69px;font-size:12.6px;line-height:12.6px;color:#212529;width:52.00px;text-align:center;">15</div>
<div class="t" style="left:537.00px;top:1146.69px;font-size:12.6px;line-height:12.6px;color:#212529;letter-spacing:-0.45px;width:79.00px;text-align:center;">BELAKANG</div>
<div class="t" style="left:616.00px;top:1146.69px;font-size:12.6px;line-height:12.6px;color:#0f77d4;font-weight:700;letter-spacing:-0.6px;width:80.00px;text-align:center;">BERJALAN</div>
<div class="t" style="left:709.30px;top:1146.69px;font-size:12.6px;line-height:12.6px;color:#212529;white-space:nowrap;">Rp 1.000</div>
<div class="t" style="left:259.00px;top:1181.31px;font-size:12.6px;line-height:12.6px;color:#212529;width:31.00px;text-align:center;">20</div>
<div class="t" style="left:290.00px;top:1181.31px;font-size:12.6px;line-height:12.6px;color:#212529;width:146.00px;text-align:center;">15 Mei 2023 - 17:24:11</div>
<div class="t" style="left:436.00px;top:1181.31px;font-size:12.6px;line-height:12.6px;color:#212529;width:49.00px;text-align:center;">2D</div>
<div class="t" style="left:485.00px;top:1181.31px;font-size:12.6px;line-height:12.6px;color:#212529;width:52.00px;text-align:center;">51</div>
<div class="t" style="left:537.00px;top:1181.31px;font-size:12.6px;line-height:12.6px;color:#212529;letter-spacing:-0.45px;width:79.00px;text-align:center;">BELAKANG</div>
<div class="t" style="left:616.00px;top:1181.31px;font-size:12.6px;line-height:12.6px;color:#0f77d4;font-weight:700;letter-spacing:-0.6px;width:80.00px;text-align:center;">BERJALAN</div>
<div class="t" style="left:709.30px;top:1181.31px;font-size:12.6px;line-height:12.6px;color:#212529;white-space:nowrap;">Rp 1.000</div>
<div class="t" style="left:259.00px;top:1215.67px;font-size:12.2px;line-height:12.2px;color:#212529;font-weight:700;width:437.00px;text-align:center;">TOTAL</div>
<div class="t" style="left:704.70px;top:1215.67px;font-size:12.2px;line-height:12.2px;color:#212529;font-weight:700;white-space:nowrap;">Rp 20.000</div>
<div class="r" style="left:0px;top:1504px;width:720px;height:96px;background:#fff;"></div>
<div class="r" style="left:0px;top:1504px;width:720px;height:2px;background:linear-gradient(#cfd2cf,#eef0ee);"></div>
<svg class="r" style="left:0;top:1504px" width="720" height="96" viewBox="0 1504 720 96">
<rect x="198.5" y="1540" width="24" height="24" rx="2" fill="#636363"/>
<circle cx="359" cy="1552.5" r="16" fill="none" stroke="#636363" stroke-width="3"/>
<circle cx="359" cy="1552.5" r="11.5" fill="#636363"/>
<path d="M494.5 1552.5 L515.8 1539.6 Q517.7 1538.8 517.7 1540.8 V1564.2 Q517.7 1566.2 515.8 1565.4 Z" fill="#636363"/>
</svg>
</body></html>
